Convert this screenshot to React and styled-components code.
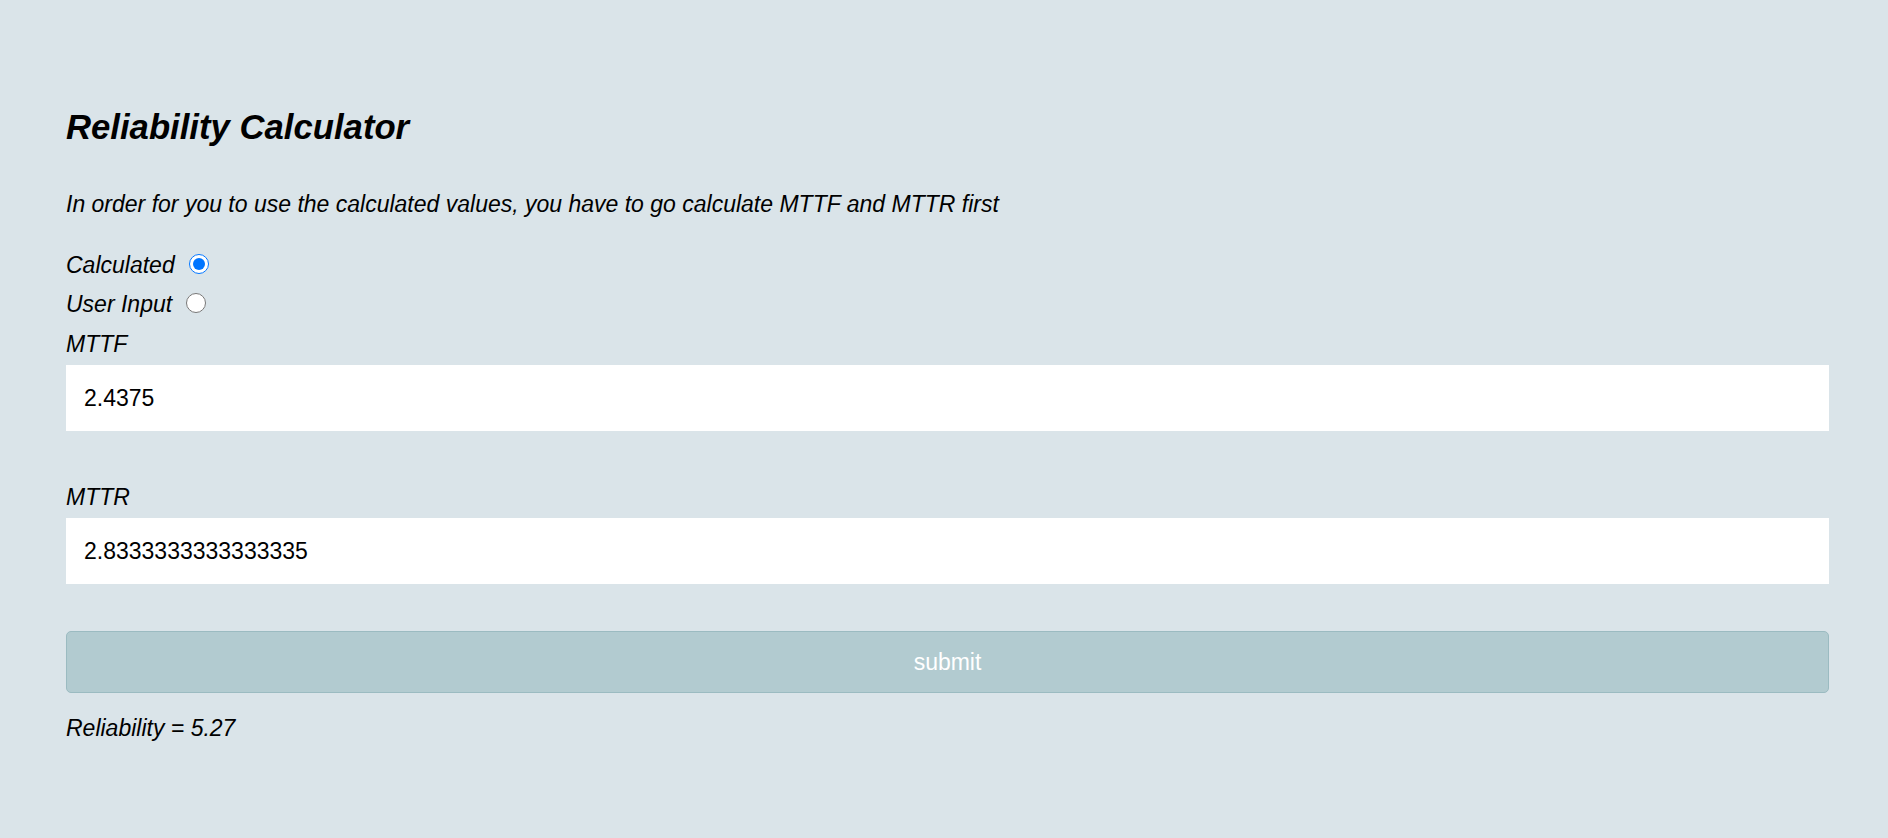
import React, { useState } from "react";
import styled, { createGlobalStyle } from "styled-components";

const GlobalStyle = createGlobalStyle`
  html, body {
    margin: 0;
    padding: 0;
    background-color: #dae4e9;
  }
  body {
    font-family: "Liberation Sans", Arial, sans-serif;
    color: #000;
  }
`;

// Page wrapper
const Page = styled.main`
  min-height: 838px;
  box-sizing: border-box;
  padding: 108px 59px 40px 66px;
  background-color: #dae4e9;
`;

const Title = styled.h1`
  margin: 0;
  font-size: 34.7px;
  line-height: 39px;
  font-weight: 700;
  font-style: italic;
`;

const Note = styled.p`
  margin: 44px 0 0;
  font-size: 23px;
  line-height: 26px;
  font-style: italic;
`;

const Choices = styled.div`
  margin-top: 29px;
`;

const Choice = styled.label`
  display: block;
  font-size: 23px;
  line-height: 39px;
  font-style: italic;
  cursor: pointer;

  input {
    width: 20px;
    height: 20px;
    margin: 0 0 0 14px;
    vertical-align: -1px;
    accent-color: #0075ff;
    cursor: pointer;
  }
`;

const Field = styled.div`
  margin-top: ${(p) => p.$gap}px;
`;

const FieldLabel = styled.label`
  display: block;
  font-size: 23px;
  line-height: 39px;
  font-style: italic;
`;

const TextInput = styled.input`
  display: block;
  width: 100%;
  height: 66px;
  box-sizing: border-box;
  margin-top: 1px;
  padding: 0 18px;
  border: none;
  outline: none;
  background: #fff;
  font-family: "Liberation Sans", Arial, sans-serif;
  font-size: 23px;
  color: #000;
`;

const SubmitButton = styled.button`
  display: block;
  width: 100%;
  height: 62px;
  margin-top: 47px;
  box-sizing: border-box;
  border: 1px solid #9bbbc1;
  border-radius: 5px;
  background-color: #b2cbd0;
  color: #fff;
  font-family: "Liberation Sans", Arial, sans-serif;
  font-size: 23px;
  cursor: pointer;
`;

const Result = styled.p`
  margin: 22px 0 0;
  font-size: 23px;
  line-height: 26px;
  font-style: italic;
`;

export default function App() {
  const [mode, setMode] = useState("calculated");
  const [mttf, setMttf] = useState("2.4375");
  const [mttr, setMttr] = useState("2.8333333333333335");

  return (
    <>
      <GlobalStyle />
      <Page>
        <Title>Reliability Calculator</Title>
        <Note>
          In order for you to use the calculated values, you have to go
          calculate MTTF and MTTR first
        </Note>

        <Choices>
          <Choice>
            Calculated
            <input
              type="radio"
              name="mode"
              checked={mode === "calculated"}
              onChange={() => setMode("calculated")}
            />
          </Choice>
          <Choice>
            User Input
            <input
              type="radio"
              name="mode"
              checked={mode === "user"}
              onChange={() => setMode("user")}
            />
          </Choice>
        </Choices>

        <Field $gap={1}>
          <FieldLabel htmlFor="mttf">MTTF</FieldLabel>
          <TextInput
            id="mttf"
            value={mttf}
            onChange={(e) => setMttf(e.target.value)}
          />
        </Field>

        <Field $gap={47}>
          <FieldLabel htmlFor="mttr">MTTR</FieldLabel>
          <TextInput
            id="mttr"
            value={mttr}
            onChange={(e) => setMttr(e.target.value)}
          />
        </Field>

        <SubmitButton type="button">submit</SubmitButton>
        <Result>Reliability = 5.27</Result>
      </Page>
    </>
  );
}
